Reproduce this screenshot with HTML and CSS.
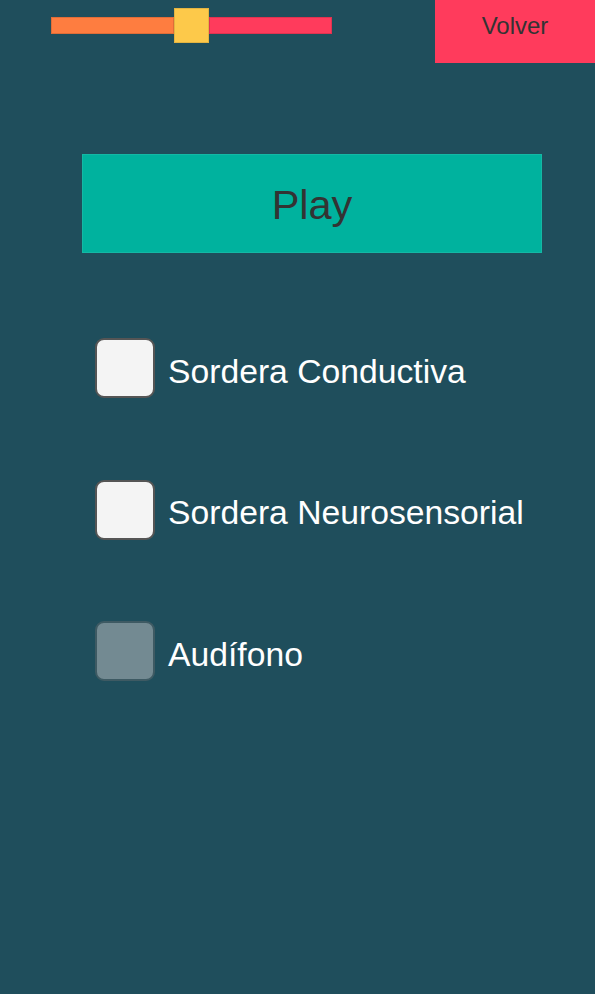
FILE: index.html
```html
<!DOCTYPE html>
<html lang="es">
<head>
<meta charset="utf-8">
<title>Menu</title>
<link rel="stylesheet" href="styles.css">
</head>
<body>
<div class="screen">
  <div class="top">
    <div class="slider">
      <div class="fill"></div>
      <div class="handle"></div>
      <div class="rest"></div>
    </div>
    <div class="volver">Volver</div>
  </div>
  <div class="play">Play</div>
  <div class="options">
    <div class="opt"><span class="box"></span><span class="label">Sordera Conductiva</span></div>
    <div class="opt"><span class="box"></span><span class="label">Sordera Neurosensorial</span></div>
    <div class="opt"><span class="box dim"></span><span class="label">Audífono</span></div>
  </div>
</div>
</body>
</html>
```
FILE: styles.css
```css
html, body { margin: 0; padding: 0; }
body {
  background: #1f4e5c;
  font-family: "Liberation Sans", Arial, sans-serif;
  width: 595px;
  height: 994px;
  overflow: hidden;
}
.screen { display: flex; flex-direction: column; }
.top {
  display: flex;
  justify-content: space-between;
  height: 63px;
}
.slider {
  display: flex;
  align-items: center;
  height: 35px;
  margin-top: 8px;
  margin-left: 51px;
}
.fill {
  width: 123px;
  height: 17px;
  background: #fe7d40;
  box-shadow: inset 0 0 0 1px rgba(0,0,0,0.12);
}
.handle {
  width: 35px;
  height: 35px;
  background: #fdc94a;
  box-shadow: inset 0 0 0 1px rgba(0,0,0,0.1);
}
.rest {
  width: 123px;
  height: 17px;
  background: #ff3b5c;
  box-shadow: inset 0 0 0 1px rgba(0,0,0,0.12);
}
.volver {
  width: 160px;
  height: 63px;
  background: #ff3b5c;
  color: #333;
  font-size: 24px;
  display: flex;
  align-items: center;
  justify-content: center;
  padding-bottom: 11px;
  box-sizing: border-box;
}
.play {
  margin-top: 91px;
  margin-left: 82px;
  width: 460px;
  height: 99px;
  background: #00b29e;
  color: #333;
  font-size: 41.5px;
  display: flex;
  align-items: center;
  justify-content: center;
  padding-top: 2px;
  box-sizing: border-box;
  box-shadow: inset 0 0 0 1px rgba(255,255,255,0.08);
}
.options {
  margin-top: 85px;
  margin-left: 95px;
  display: flex;
  flex-direction: column;
  gap: 81.5px;
}
.opt {
  display: flex;
  align-items: center;
  height: 60px;
}
.box {
  width: 60px;
  height: 60px;
  box-sizing: border-box;
  border-radius: 9px;
  border: 2px solid #555;
  background: #f4f4f4;
  flex: none;
}
.box.dim {
  background: #738a92;
  border-color: #3e5a63;
}
.label {
  margin-left: 13px;
  margin-top: 6px;
  color: #fff;
  font-size: 33.7px;
}
```
